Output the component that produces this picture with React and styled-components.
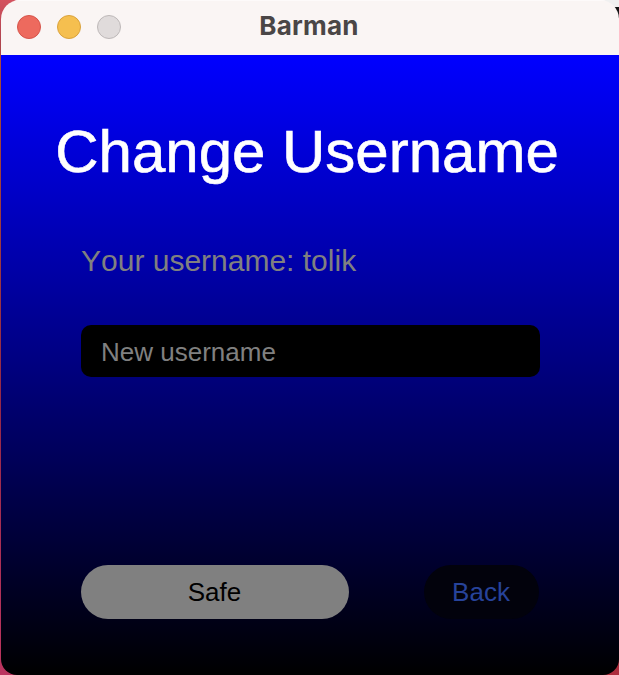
import React from "react";
import styled, { createGlobalStyle } from "styled-components";

const GlobalStyle = createGlobalStyle`
  *, *::before, *::after { box-sizing: border-box; }
  body { margin: 0; overflow: hidden; }
`;

const Desktop = styled.div`
  height: 100vh;
  padding-left: 1px;
  background:
    linear-gradient(to bottom, #f0f0f0 0 7px, #151515 7px 18px, #b0b0b8 18px 30px, #ac2b3c 60px) right top / 50% 100% no-repeat,
    linear-gradient(to bottom, #d4525f 0, #b04450 40px, #a34a35 80px, #962848 60%, #bb3560 100%);
`;

const Window = styled.main`
  height: 100%;
  display: flex;
  flex-direction: column;
  border-radius: 19px 19px 16px 16px;
  overflow: hidden;
  font-family: "Liberation Sans", Arial, sans-serif;
  font-kerning: none;
`;

const TitleBar = styled.header`
  flex: 0 0 55px;
  display: grid;
  grid-template-columns: 120px 1fr 120px;
  align-items: center;
  background: #faf5f4;
  box-shadow: inset 0 1px 0 #fdfafa;
`;

const Controls = styled.div`
  display: flex;
  gap: 16px;
  padding: 0 0 1px 16px;
`;

const Control = styled.span`
  width: 24px;
  height: 24px;
  border-radius: 50%;
  background: ${(p) => p.$fill};
  border: 1px solid ${(p) => p.$edge};
`;

const Title = styled.div`
  text-align: center;
  font: 700 26px/32px Inter, sans-serif;
  letter-spacing: 0.25px;
  color: #4a4646;
  padding: 0 2px 3px 0;
`;

const Content = styled.section`
  flex: 1;
  display: flex;
  flex-direction: column;
  padding: 62px 79px 56px 80px;
  background: linear-gradient(to bottom, #0000ff, #000000);
`;

const Heading = styled.h1`
  margin: 0 -34px 0 -41px;
  text-align: center;
  font-size: 60px;
  line-height: 70px;
  font-weight: 400;
  white-space: nowrap;
  color: #fff;
  -webkit-text-stroke: 0.6px #fff;
`;

const Current = styled.p`
  margin: 57px 0 0;
  font-size: 30px;
  line-height: 34px;
  color: #808080;
`;

const Field = styled.input`
  margin-top: 46.5px;
  width: 458.5px;
  height: 52.5px;
  padding: 2.5px 20px 0;
  border: 0;
  border-radius: 10px;
  outline: none;
  background: #000;
  color: #808080;
  font: 26px "Liberation Sans", Arial, sans-serif;
  &::placeholder { color: #808080; opacity: 1; }
`;

const Actions = styled.div`
  margin-top: auto;
  display: flex;
  justify-content: space-between;
  padding-right: 1px;
`;

const Button = styled.button`
  width: ${(p) => p.$width}px;
  height: 54px;
  padding: 0 1px 0 0;
  border: 0;
  border-radius: 27px;
  background: ${(p) => p.$bg};
  color: ${(p) => p.$fg};
  font: 26px "Liberation Sans", Arial, sans-serif;
`;

export default function App() {
  return (
    <>
      <GlobalStyle />
      <Desktop>
        <Window>
          <TitleBar>
            <Controls>
              <Control $fill="#ed6a5e" $edge="#d5544b" />
              <Control $fill="#f5bf4f" $edge="#d9a23c" />
              <Control $fill="#e0dbdb" $edge="#bdb8b8" />
            </Controls>
            <Title>Barman</Title>
          </TitleBar>
          <Content>
            <Heading>Change Username</Heading>
            <Current>Your username: tolik</Current>
            <Field placeholder="New username" />
            <Actions>
              <Button $width={268} $bg="#808080" $fg="#000">Safe</Button>
              <Button $width={115} $bg="#02020c" $fg="#27439a">Back</Button>
            </Actions>
          </Content>
        </Window>
      </Desktop>
    </>
  );
}
